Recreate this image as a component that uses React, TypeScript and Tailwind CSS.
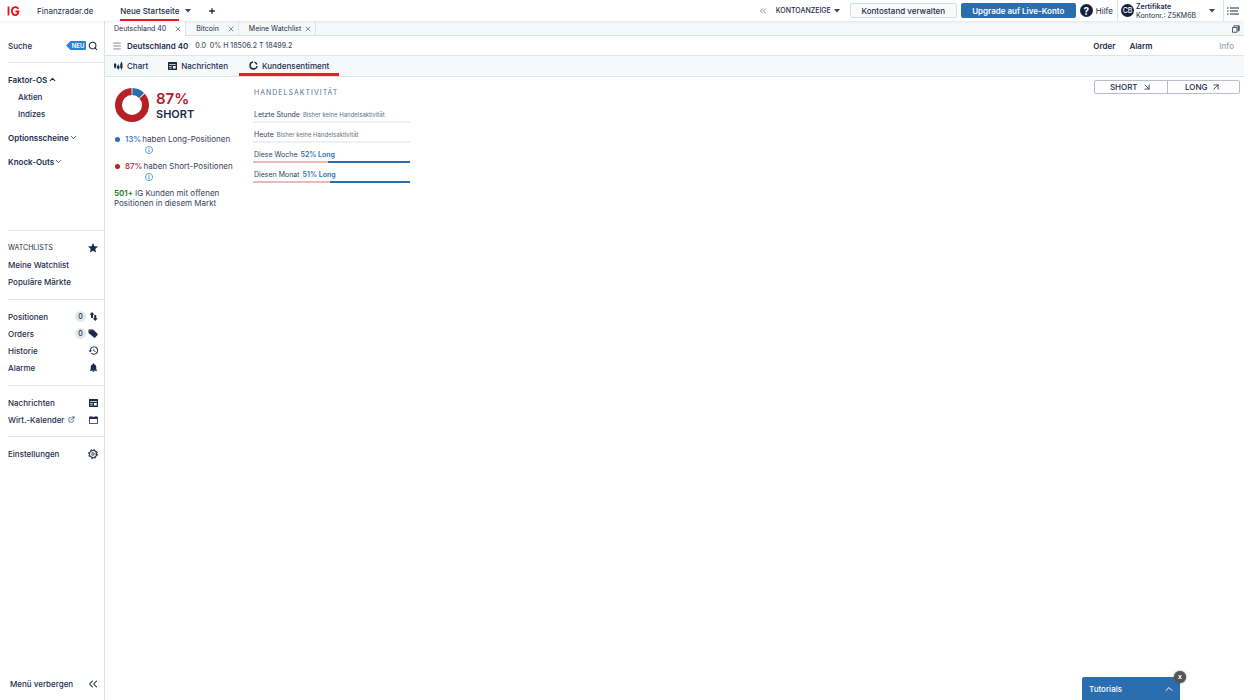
import React, { useState } from 'react';
import { ChevronDown, ChevronUp, ChevronsLeft, Search, ExternalLink, X, Plus, Menu, ArrowDownRight, ArrowUpRight } from 'lucide-react';
import { MdStar, MdHistory, MdNotifications } from 'react-icons/md';

const NewsIcon = () => (
    <svg viewBox="0 0 18 16" className="w-[9px] h-2 shrink-0" fill="currentColor">
        <path fillRule="evenodd" d="M1 0h16a1 1 0 0 1 1 1v14a1 1 0 0 1-1 1H1a1 1 0 0 1-1-1V1a1 1 0 0 1 1-1Zm1.500 4v1.500h13V4h-13ZM2.500 8v1.300h5V8h-5Zm0 3.500v1.300h5v-1.300h-5ZM10 8v5h5.500V8H10Z" />
    </svg>
);

const ChartIcon = () => (
    <svg viewBox="0 0 18 16" className="w-[9px] h-2 shrink-0" fill="currentColor">
        <path d="M0 4h4.500v7H0zM1.200 2h2v11h-2zM6 8h5v5H6zM7.500 5h2v10h-2zM12.500 3H17v9h-4.500zM14 0h2v15h-2z" />
    </svg>
);

const SentimentIcon = () => (
    <svg viewBox="0 0 18 18" className="size-[9px] shrink-0" fill="none" stroke="currentColor" strokeWidth="3">
        <path d="M8 2a7 7 0 1 0 8 8" />
        <path d="M11 2.300a7 7 0 0 1 4.800 4.700" />
    </svg>
);

const PositionsIcon = () => (
    <svg viewBox="0 0 18 18" className="size-[9px]" fill="currentColor">
        <path d="M6 0 11 5.500H8V12H4V5.500H1ZM12.500 18 7.500 12.500h3V6h4v6.500h3Z" />
    </svg>
);

const TagIcon = () => (
    <svg viewBox="0 0 20 18" className="w-2.5 h-[9px]" fill="currentColor">
        <path fillRule="evenodd" d="M2 1h8l9 8.500c.8.800.8 1.700 0 2.500l-4.500 5c-.8.800-1.700.800-2.500 0L1 8V2c0-.6.400-1 1-1Zm2 2a.8.800 0 1 0 0 1.600.8.800 0 0 0 0-1.600Z" />
    </svg>
);

const CalendarIcon = () => (
    <svg viewBox="0 0 18 16" className="w-[9px] h-2" fill="currentColor">
        <path fillRule="evenodd" d="M3 0h2v1.500h8V0h2v1.500h1.500c.8 0 1.500.700 1.500 1.500v11.500c0 .8-.7 1.500-1.500 1.500h-15C.7 16 0 15.300 0 14.500V3c0-.8.700-1.500 1.500-1.500H3V0ZM1.600 6v8.400h14.800V6H1.600Z" />
    </svg>
);

const GearIcon = () => (
    <svg viewBox="0 0 20 20" className="size-2.5" fill="none" stroke="currentColor">
        <circle cx="10" cy="10" r="7" strokeWidth="2.200" />
        <circle cx="10" cy="10" r="9" strokeWidth="2" strokeDasharray="3.530 3.530" />
        <circle cx="10" cy="10" r="2.400" strokeWidth="1.600" />
        <path strokeWidth="1" d="m8.500 8-2-3.500M8.500 12l-2 3.500M12.500 10H17" />
    </svg>
);

const InfoIcon = () => (
    <svg viewBox="0 0 16 16" className="size-2" fill="none" stroke="currentColor">
        <circle cx="8" cy="8" r="7.200" strokeWidth="1.500" />
        <path strokeWidth="1.800" d="M8 7v5.500M8 3.500v2" />
    </svg>
);

const Caret = () => (
    <svg viewBox="0 0 12 8" className="w-1.5 h-1 shrink-0" fill="#3f4757">
        <path d="M0 0h12L6 7z" />
    </svg>
);

const tabs = ['Deutschland 40', 'Bitcoin', 'Meine Watchlist'];

const activity = [
    { label: 'Letzte Stunde', long: null },
    { label: 'Heute', long: null },
    { label: 'Diese Woche', long: 52 },
    { label: 'Diesen Monat', long: 51 },
];

function SideItem({ label, icon, count }: { label: React.ReactNode; icon?: React.ReactNode; count?: number }) {
    return (
        <a href="#" className="flex items-center h-[17px] pr-1.5">
            <span className="flex items-center gap-1 flex-1">{label}</span>
            {count !== undefined && (
                <span className="size-[11px] mr-0.5 rounded-full bg-[#dfeaea] text-[7px] flex items-center justify-center">{count}</span>
            )}
            {icon && <span className="w-2.5 flex justify-center">{icon}</span>}
        </a>
    );
}

function Sidebar() {
    return (
        <aside className="w-[105px] shrink-0 border-r border-[#dce4e4] pl-2 flex flex-col">
            <div className="h-[42px] pt-2 pr-1.5 border-b border-[#e3eaea] flex items-center">
                <label htmlFor="search" className="flex-1">Suche</label>
                <span className="relative w-5 h-[9px] mr-0.5 pl-1 flex items-center justify-center text-white text-[6px] font-semibold">
                    <svg viewBox="0 0 40 18" className="absolute inset-0 w-5 h-[9px]" fill="#3182ce">
                        <path d="M9 0h29a2 2 0 0 1 2 2v14a2 2 0 0 1-2 2H9L0 9z" />
                    </svg>
                    <span className="relative">NEU</span>
                </span>
                <button id="search" aria-label="Suche"><Search className="size-2.5" strokeWidth={2.5} /></button>
            </div>

            <nav className="h-[168px] pt-2 border-b border-[#e3eaea]">
                <button className="flex items-center gap-px h-[17px] font-semibold">Faktor-OS <ChevronUp className="size-[9px]" strokeWidth={3} /></button>
                <div className="pl-2.5">
                    <SideItem label="Aktien" />
                    <SideItem label="Indizes" />
                </div>
                <button className="flex items-center h-[17px] mt-[7px] font-semibold">Optionsscheine <ChevronDown className="size-[9px]" /></button>
                <button className="flex items-center h-[17px] mt-[7px] font-semibold">Knock-Outs <ChevronDown className="size-[9px]" /></button>
            </nav>

            <div className="pt-2 pb-[9px] border-b border-[#e3eaea]">
                <div className="flex items-center justify-between h-[17px] pr-[5px]">
                    <h2 className="text-[7px] font-normal">WATCHLISTS</h2>
                    <MdStar className="size-3" />
                </div>
                <SideItem label="Meine Watchlist" />
                <SideItem label="Populäre Märkte" />
            </div>

            <div className="pt-2 pb-[9px] border-b border-[#e3eaea]">
                <SideItem label="Positionen" count={0} icon={<PositionsIcon />} />
                <SideItem label="Orders" count={0} icon={<TagIcon />} />
                <SideItem label="Historie" icon={<MdHistory className="size-[11px] shrink-0" />} />
                <SideItem label="Alarme" icon={<MdNotifications className="size-[11px] shrink-0" />} />
            </div>

            <div className="py-2 border-b border-[#e3eaea]">
                <SideItem label="Nachrichten" icon={<NewsIcon />} />
                <SideItem label={<>Wirt.-Kalender <ExternalLink className="size-[7px]" /></>} icon={<CalendarIcon />} />
            </div>

            <div className="pt-2">
                <SideItem label="Einstellungen" icon={<GearIcon />} />
            </div>

            <button className="mt-auto mb-2 h-[17px] pl-0.5 pr-1 flex items-center justify-between">
                Menü verbergen <ChevronsLeft className="size-3.5" strokeWidth={1.8} />
            </button>
        </aside>
    );
}

function Header() {
    return (
        <header className="relative z-10 h-[21px] bg-white flex items-center shadow-[0_1px_3px_rgba(0,0,0,0.08)]">
            <svg viewBox="0 0 26 20" className="w-[13px] h-2.5 ml-[7px]" fill="none" stroke="#e8131b" strokeWidth="3.600">
                <path d="M3 1v18M22.500 6C21 1.500 15 1 12 4c-3 3-3 9 0 12 4 4 11 2 11-5h-6" />
            </svg>
            <a href="#" className="ml-[17px] font-normal">Finanzradar.de</a>
            <a href="#" className="ml-[27px] h-full pt-0.5 border-b-2 border-[#ed1c24] flex items-center">Neue Startseite</a>
            <button aria-label="Startseite wählen" className="ml-1.5"><Caret /></button>
            <button aria-label="Hinzufügen" className="ml-[17px]"><Plus className="size-2" strokeWidth={4} /></button>

            <div className="ml-auto flex items-center h-full">
                <button aria-label="Einklappen" className="text-gray-500 mr-2"><ChevronsLeft className="size-2.5" strokeWidth={2} /></button>
                <button className="flex items-center gap-[3px] text-[7px]">KONTOANZEIGE <Caret /></button>
                <button className="ml-2.5 h-[15px] w-[107px] border border-[#d5dddf] rounded-xs bg-[#f9fbfb]">Kontostand verwalten</button>
                <button className="ml-1 h-[15px] w-[115px] rounded-xs bg-[#2a6eb0] text-white font-semibold">Upgrade auf Live-Konto</button>
                <a href="#" className="ml-1 flex items-center gap-[3px] font-normal">
                    <span className="size-[13px] rounded-full bg-[#10203f] text-white font-bold text-[10px] flex items-center justify-center">?</span>
                    Hilfe
                </a>
                <button className="ml-1 h-full w-[107px] pl-[3px] pr-2 border-x border-[#dce4e4] flex items-center text-left">
                    <span className="size-[13px] rounded-full bg-[#10203f] text-white text-[7px] flex items-center justify-center">CB</span>
                    <span className="ml-0.5 flex-1 text-[7px] leading-[9px]">
                        <strong className="block font-semibold">Zertifikate</strong>
                        <span className="block font-normal">Kontonr.: Z5KM6B</span>
                    </span>
                    <Caret />
                </button>
                <button aria-label="Menü" className="pl-[3px] pr-[5px]">
                    <svg viewBox="0 0 24 16" className="w-3 h-2" stroke="currentColor" strokeWidth="2.400">
                        <path d="M0 2h3M6 2h18M0 8h3M6 8h16M0 14h3M6 14h18" />
                    </svg>
                </button>
            </div>
        </header>
    );
}

function Sentiment() {
    return (
        <section className="w-[148px] pl-[9px] pt-2.5 font-normal leading-2.5 text-[#36425d]">
            <div className="flex items-center gap-1.5">
                <svg viewBox="0 0 36 36" className="size-9" fill="none" strokeWidth="7">
                    <circle cx="18" cy="18" r="13.500" stroke="#b72025" pathLength="100" strokeDasharray="86 14" strokeDashoffset="-13.500" transform="rotate(-90 18 18)" />
                    <circle cx="18" cy="18" r="13.500" stroke="#2a6eb0" pathLength="100" strokeDasharray="12 88" strokeDashoffset="-0.500" transform="rotate(-90 18 18)" />
                </svg>
                <div className="pt-0.5">
                    <div className="text-[15px] leading-4 font-semibold text-[#b72025]">87%</div>
                    <div className="text-[11px] leading-[14px] font-semibold text-[#1c2b4b]">SHORT</div>
                </div>
            </div>
            <div className="mt-[11px] flex items-center">
                <i className="size-[5px] ml-px mr-[5px] rounded-full bg-[#2a6eb0]" />
                <span className="text-[#2a6eb0] font-medium mr-px">13%</span>haben Long-Positionen
            </div>
            <button aria-label="Info Long-Positionen" className="ml-[31px] mt-0.5 block text-[#2d87d0]"><InfoIcon /></button>
            <div className="mt-[7px] flex items-center">
                <i className="size-[5px] ml-px mr-[5px] rounded-full bg-[#b72025]" />
                <span className="text-[#b72025] font-medium mr-px">87%</span>haben Short-Positionen
            </div>
            <button aria-label="Info Short-Positionen" className="ml-[31px] mt-0.5 block text-[#2d87d0]"><InfoIcon /></button>
            <p className="mt-[7px]"><span className="text-[#168020] font-semibold mr-0.5">501+</span>IG Kunden mit offenen<br />Positionen in diesem Markt</p>
        </section>
    );
}

function Activity() {
    return (
        <section className="w-[157px] pt-2.5 font-normal text-[#36425d]">
            <h3 className="h-3 pl-px text-[7px] leading-3 font-normal tracking-[1px] text-[#667085]">HANDELSAKTIVITÄT</h3>
            <div className="pt-1">
                {activity.map((row) => (
                    <div key={row.label} className="h-5 flex flex-col justify-end">
                        <div className="pl-px pb-0.5 text-[7px] leading-[9px] flex items-center gap-[3px]">
                            {row.label}
                            {row.long === null
                                ? <span className="text-[6px] text-[#667085]">Bisher keine Handelsaktivität</span>
                                : <strong className="font-semibold text-[#2a6eb0]">{row.long}% Long</strong>}
                        </div>
                        <div className="h-0.5 flex bg-[#edf1f1]">
                            {row.long !== null && (
                                <>
                                    <div className="flex-1 bg-[#e8b9b9]" />
                                    <div className="bg-[#2a6eb0]" style={{ width: `${row.long}%` }} />
                                </>
                            )}
                        </div>
                    </div>
                ))}
            </div>
        </section>
    );
}

export default function App() {
    const [openTabs, setOpenTabs] = useState(tabs);

    return (
        <div className="min-h-screen flex flex-col bg-white font-['Inter',sans-serif] font-medium text-[8px] leading-3 text-[#1c2b4b]">
            <Header />
            <div className="flex flex-1">
                <Sidebar />
                <main className="flex-1 min-w-0">
                    {/* Workspace tabs */}
                    <div className="h-[15px] flex bg-[#f6f9f9] text-[7px] font-normal border-b border-[#dce4e4]">
                        {openTabs.map((tab, i) => (
                            <div key={tab} className={`flex items-center h-[15px] pr-[3px] border-r border-[#dce4e4] ${i === 0 ? 'bg-white pl-[9px]' : 'pl-2.5'} ${tab.startsWith('Meine') ? 'gap-[3px]' : 'gap-2'}`}>
                                <button className="whitespace-nowrap">{tab}</button>
                                <button aria-label={`${tab} schließen`} className="text-gray-600" onClick={() => setOpenTabs(openTabs.filter((t) => t !== tab))}>
                                    <X className="size-2" strokeWidth={2} />
                                </button>
                            </div>
                        ))}
                        <button aria-label="Fenster" className="ml-auto mr-1 pt-0.5">
                            <svg viewBox="0 0 16 16" className="size-2" fill="none" stroke="#3f4757" strokeWidth="1.800">
                                <path d="M1 5h9v9.500H1zM4 4V1.500h10.500v10H11" />
                                <path d="M12.500 2v9" strokeWidth="2.500" />
                            </svg>
                        </button>
                    </div>

                    {/* Market row */}
                    <div className="h-5 pl-[7px] pr-2.5 flex items-center border-b border-[#dce4e4]">
                        <button aria-label="Marktmenü" className="text-gray-500"><Menu className="size-2.5" strokeWidth={2} /></button>
                        <h1 className="ml-[5px] font-semibold">Deutschland 40</h1>
                        <span className="ml-[7px] text-[7px] text-[#4a5468] whitespace-pre">0.0  0% H 18506.2 T 18499.2</span>
                        <button className="ml-auto font-semibold">Order</button>
                        <button className="ml-3.5 font-semibold">Alarm</button>
                        <button className="ml-[67px] text-gray-400">Info</button>
                    </div>

                    <nav className="h-[21px] pl-[9px] pr-2 flex items-stretch gap-5 bg-[#f6f9f9] border-b border-[#dce4e4]">
                        <button className="flex items-center gap-1 pb-px"><ChartIcon />Chart</button>
                        <button className="flex items-center gap-1 pb-px"><NewsIcon />Nachrichten</button>
                        <button className="-mx-[9px] px-2.5 pb-px flex items-center gap-1 shadow-[inset_0_-3px_0_#ed1c24]"><SentimentIcon />Kundensentiment</button>
                    </nav>

                    <div className="flex items-start">
                        <Sentiment />
                        <Activity />
                        <div className="ml-auto mt-[3px] mr-1 w-[146px] h-3.5 flex border border-[#b9bcc8] rounded-xs">
                            <button className="flex-1 flex items-center justify-center gap-1 border-r border-[#b9bcc8]">SHORT <ArrowDownRight className="size-2.5" /></button>
                            <button className="flex-1 flex items-center justify-center gap-1">LONG <ArrowUpRight className="size-2.5" /></button>
                        </div>
                    </div>
                </main>
            </div>

            <div className="fixed bottom-0 right-16 w-[98px] h-[23px]">
                <button className="w-full h-full pl-[7px] pr-[5px] flex items-center justify-between bg-[#2a6eb0] text-white rounded-t-xs">
                    Tutorials <ChevronUp className="size-3" />
                </button>
                <button aria-label="Schließen" className="absolute -top-1.5 -right-1.5 size-3 rounded-full bg-[#555] text-white text-[7px] font-bold flex items-center justify-center shadow-[0_0_2px_#555]">x</button>
            </div>
        </div>
    );
}
